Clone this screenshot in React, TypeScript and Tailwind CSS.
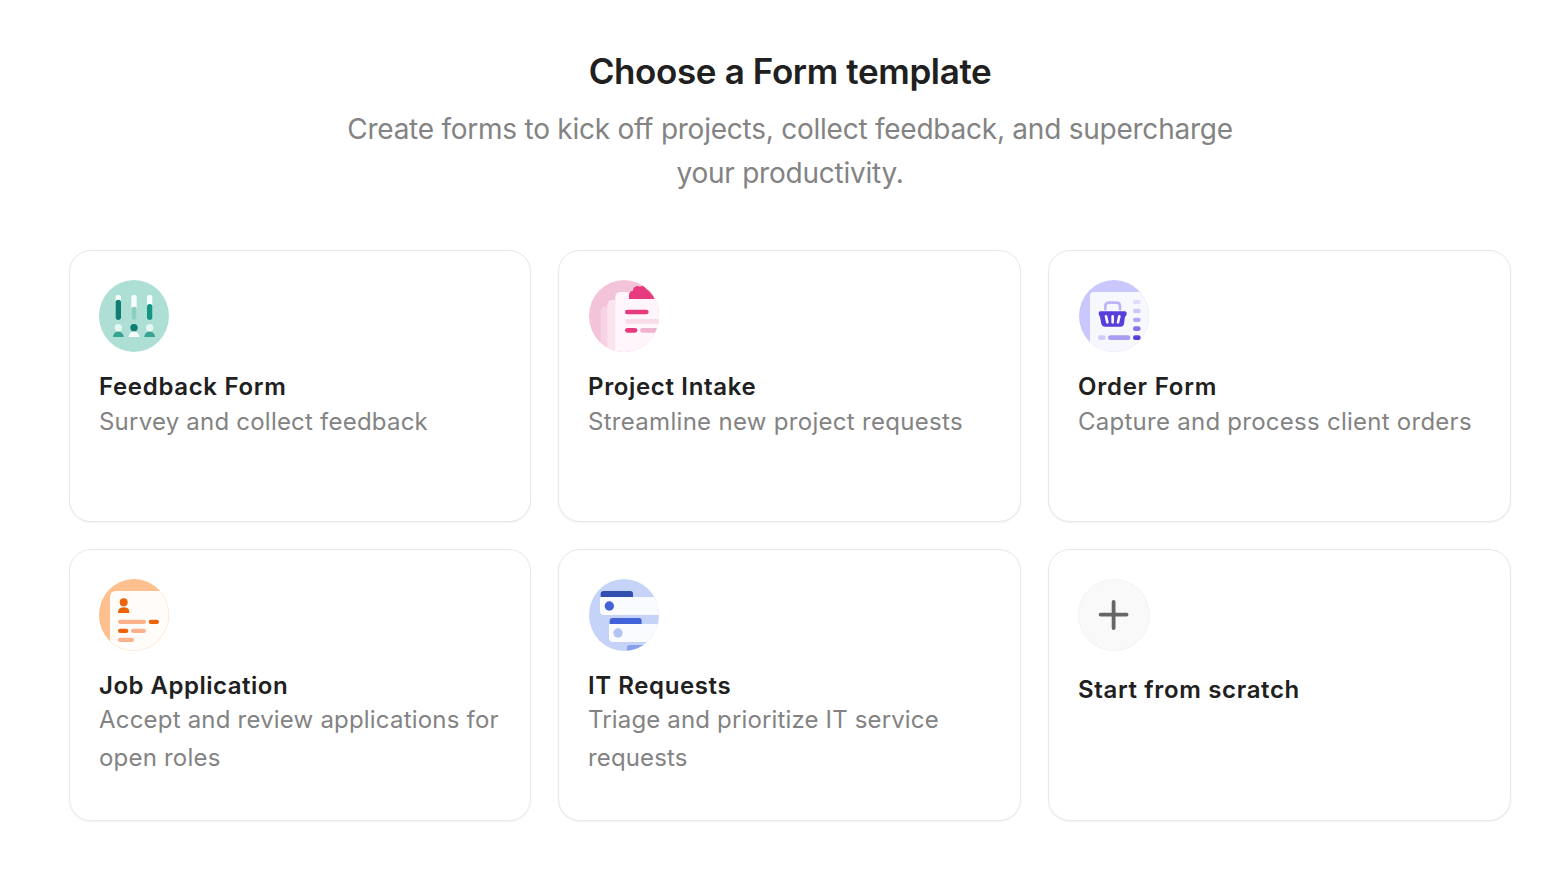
import type { ReactNode } from 'react';

type Template = {
  title: string;
  description?: string;
  icon: ReactNode;
  iconClass?: string;
  titleClass: string;
  descriptionClass?: string;
};

type IconProps = {
  id: string;
  children: ReactNode;
};

// Every illustration is drawn on the same grid and clipped to the round badge
function RoundIcon({ id, children }: IconProps) {
  return (
    <svg viewBox="15 18 210 216" className="block h-[72px] w-[70px]" aria-hidden="true">
      <clipPath id={id}>
        <ellipse cx="120" cy="126" rx="105" ry="108" />
      </clipPath>
      <g clipPath={`url(#${id})`}>{children}</g>
    </svg>
  );
}

function FeedbackIcon() {
  return (
    <RoundIcon id="feedback-clip">
      <rect width="240" height="252" fill="#addfd4" />
      <rect x="65" y="62" width="16" height="76" rx="8" fill="#f6fdfb" />
      <rect x="65" y="77" width="16" height="61" rx="8" fill="#107d72" />
      <rect x="112" y="62" width="16" height="76" rx="8" fill="#f6fdfb" />
      <rect x="112" y="98" width="16" height="40" rx="8" fill="#8ccfc1" />
      <rect x="159" y="62" width="16" height="76" rx="8" fill="#f6fdfb" />
      <rect x="159" y="90" width="16" height="48" rx="8" fill="#149483" />
      <circle cx="73" cy="161" r="11" fill="#e4f7f2" />
      <circle cx="120" cy="161" r="11" fill="#107d72" />
      <circle cx="167" cy="161" r="11" fill="#e4f7f2" />
      <path d="M57 189 C57 179 64 173 73 173 C82 173 89 179 89 189 Z" fill="#38a391" />
      <path d="M104 189 C104 179 111 173 120 173 C129 173 136 179 136 189 Z" fill="#f6fdfb" />
      <path d="M151 189 C151 179 158 173 167 173 C176 173 183 179 183 189 Z" fill="#38a391" />
    </RoundIcon>
  );
}

function ProjectIcon() {
  return (
    <RoundIcon id="project-clip">
      <rect width="240" height="252" fill="#f3c4d9" />
      <path d="M50 252 V114 Q50 98 66 98 H240 V252 Z" fill="#f7d3e3" />
      <path d="M70 252 V94 Q70 78 86 78 H240 V252 Z" fill="#fbe4ef" />
      <path d="M94 252 V70 Q94 54 110 54 H240 V252 Z" fill="#fff5fa" />
      <path d="M135 75 V64 Q135 51 147 50 Q147 40 157 37 Q163 35 167 38 Q176 33 183 40 L188 46 L240 80 V75 Z" fill="#e83a7e" />
      <path d="M212 75 H240 V85 H212 Z" fill="#fff5fa" />
      <rect x="123" y="107" width="71" height="14" rx="7" fill="#e83a7e" />
      <rect x="125" y="135" width="110" height="14" rx="3" fill="#f8dce9" />
      <rect x="123" y="162" width="37" height="14" rx="7" fill="#e83a7e" />
      <rect x="168" y="162" width="70" height="14" rx="7" fill="#f0b4ce" />
    </RoundIcon>
  );
}

function OrderIcon() {
  return (
    <RoundIcon id="order-clip">
      <rect width="240" height="252" fill="#c9c7fb" />
      <path d="M48 252 V66 Q48 54 60 54 H240 V252 Z" fill="#f7f8fe" />
      <path d="M94 106 V97 Q94 86 105 86 H127 Q138 86 138 97 V106" fill="none" stroke="#bdb5f7" strokeWidth="8" strokeLinecap="round" />
      <path d="M78 112 H154 Q159 113 158 121 Q157 126 153 128 L150 149 Q149 158 139 158 H94 Q84 158 82 149 L78 128 Q74 125 74 118 Q74 113 78 112 Z" fill="#583edb" />
      <path d="M96 127 L100 145 M116 127 V145 M136 127 L132 145" fill="none" stroke="#f7f8fe" strokeWidth="8" strokeLinecap="round" />
      <rect x="177" y="77" width="23" height="13" rx="6" fill="#dfdcfb" />
      <rect x="177" y="104" width="23" height="14" rx="7" fill="#ccc7f9" />
      <rect x="177" y="131" width="23" height="13" rx="6.5" fill="#b1a8f2" />
      <rect x="177" y="157" width="23" height="14" rx="7" fill="#8574e8" />
      <rect x="177" y="184" width="23" height="14" rx="7" fill="#583edb" />
      <rect x="72" y="184" width="23" height="14" rx="7" fill="#d0ccfa" />
      <rect x="102" y="184" width="67" height="14" rx="7" fill="#a89df2" />
    </RoundIcon>
  );
}

function JobIcon() {
  return (
    <RoundIcon id="job-clip">
      <rect width="240" height="252" fill="#fdc08e" />
      <path d="M48 252 V72 Q48 54 66 54 H240 V252 Z" fill="#fffcfa" />
      <ellipse cx="120" cy="126" rx="104" ry="107" fill="none" stroke="#fdc08e" strokeOpacity="0.25" strokeWidth="2" />
      <circle cx="89" cy="88" r="12" fill="#ec6409" />
      <path d="M72 120 V117 Q72 110 78 106 Q83 103 89 103 Q96 103 101 106 Q106 110 106 117 V120 Z" fill="#ec6409" />
      <rect x="72" y="140" width="84" height="13" rx="6.5" fill="#fbb28b" />
      <rect x="164" y="140" width="31" height="13" rx="6.5" fill="#ec6409" />
      <rect x="72" y="167" width="31" height="13" rx="6.5" fill="#ec6409" />
      <rect x="111" y="167" width="45" height="13" rx="6.5" fill="#fbb28b" />
      <rect x="72" y="194" width="48" height="13" rx="6.5" fill="#fbb28b" />
    </RoundIcon>
  );
}

function RequestsIcon() {
  return (
    <RoundIcon id="requests-clip">
      <rect width="240" height="252" fill="#c5d3f8" />
      <path d="M50 74 V62 Q50 54 59 54 H139 Q147 54 147 62 V74 Z" fill="#304fae" />
      <path d="M48 72 H240 V126 H60 Q48 126 48 114 Z" fill="#f9fbff" />
      <circle cx="76" cy="99" r="14" fill="#4262d8" />
      <path d="M77 155 V143 Q77 135 86 135 H165 Q173 135 173 143 V155 Z" fill="#4262d8" />
      <path d="M75 153 H240 V207 H87 Q75 207 75 195 Z" fill="#f9fbff" />
      <circle cx="102" cy="180" r="14" fill="#b4c3f4" />
      <path d="M129 252 V225 Q129 216 138 216 H240 V252 Z" fill="#87a0eb" />
    </RoundIcon>
  );
}

function PlusIcon() {
  return (
    <svg viewBox="0 0 72 72" className="block size-[72px]" aria-hidden="true">
      <circle cx="36" cy="36" r="35.5" fill="#f9f9f9" stroke="#f3f3f3" />
      <path d="M35.6 23 V49 M22.6 35.6 H48.6" stroke="#666666" strokeWidth="3.8" strokeLinecap="round" />
    </svg>
  );
}

const templates: Template[] = [
  {
    title: 'Feedback Form',
    description: 'Survey and collect feedback',
    icon: <FeedbackIcon />,
    titleClass: 'tracking-[0.67px]',
    descriptionClass: '-mt-px tracking-[0.22px]',
  },
  {
    title: 'Project Intake',
    description: 'Streamline new project requests',
    icon: <ProjectIcon />,
    iconClass: 'ml-px',
    titleClass: 'tracking-[0.66px]',
    descriptionClass: '-mt-px tracking-[0.3px]',
  },
  {
    title: 'Order Form',
    description: 'Capture and process client orders',
    icon: <OrderIcon />,
    iconClass: 'ml-px',
    titleClass: 'tracking-[0.75px]',
    descriptionClass: '-mt-px tracking-[0.26px]',
  },
  {
    title: 'Job Application',
    description: 'Accept and review applications for open roles',
    icon: <JobIcon />,
    titleClass: 'tracking-[0.5px]',
    descriptionClass: '-mt-0.5 tracking-[0.2px]',
  },
  {
    title: 'IT Requests',
    description: 'Triage and prioritize IT service requests',
    icon: <RequestsIcon />,
    iconClass: 'ml-px',
    titleClass: 'tracking-[0.6px]',
    descriptionClass: '-mt-0.5 tracking-[0.15px]',
  },
  {
    title: 'Start from scratch',
    icon: <PlusIcon />,
    titleClass: 'mt-1 tracking-[0.65px]',
  },
];

function TemplateCard({ template }: { template: Template }) {
  return (
    <button
      type="button"
      className="flex h-[272px] flex-col items-start rounded-[22px] border border-[#e8e8e8] bg-white pt-[29px] pr-5 pl-[29px] text-left shadow-[0_1px_2px_rgba(0,0,0,0.06)]"
    >
      <div className={template.iconClass}>{template.icon}</div>
      <div className="mt-[18px]">
        <h2 className={`text-2xl leading-[34px] font-semibold text-[#202020] ${template.titleClass}`}>
          {template.title}
        </h2>
        {template.description && (
          <p className={`text-2xl leading-[38px] text-[#838383] ${template.descriptionClass}`}>
            {template.description}
          </p>
        )}
      </div>
    </button>
  );
}

export default function App() {
  return (
    <main className="h-[872px] overflow-hidden bg-white pt-[49px] pr-[47px] pl-[69px] font-['Inter',sans-serif]">
      <header className="flex flex-col items-center text-center">
        <h1 className="text-[35px] leading-[44px] font-semibold tracking-[-0.37px] text-[#202020]">
          Choose a Form template
        </h1>
        <p className="mt-[14px] w-[910px] text-[28px] leading-[44px] tracking-[-0.24px] text-[#838383]">
          Create forms to kick off projects, collect feedback, and supercharge your productivity.
        </p>
      </header>

      <section className="mt-[55px] grid grid-cols-[462px_463px_463px] gap-[27px]">
        {templates.map((template) => (
          <TemplateCard key={template.title} template={template} />
        ))}
      </section>
    </main>
  );
}
